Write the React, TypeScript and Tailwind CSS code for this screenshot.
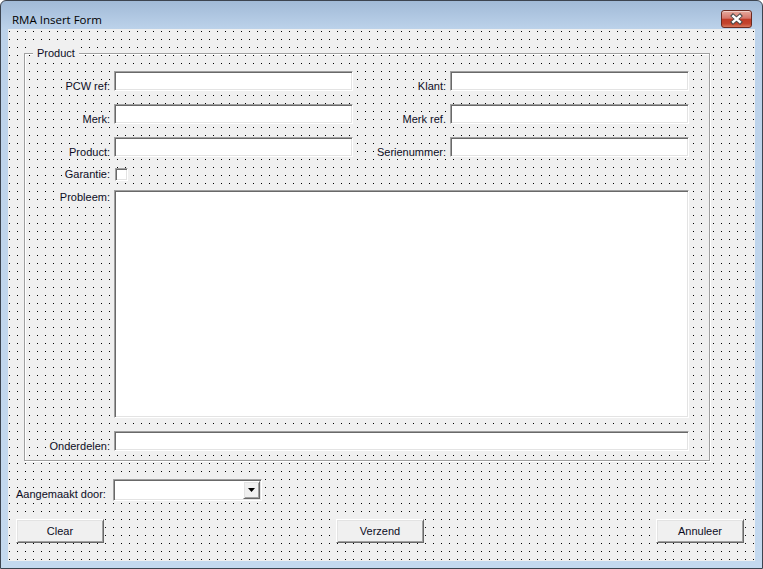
const sunken =
  "border border-t-[#a0a0a0] border-l-[#a0a0a0] border-r-white border-b-white shadow-[inset_1px_1px_0_#696969,inset_-1px_-1px_0_#e3e3e3]";
const raised =
  "border border-t-white border-l-white border-r-[#696969] border-b-[#696969] shadow-[inset_1px_1px_0_#e3e3e3,inset_-1px_-1px_0_#a0a0a0]";
const dots =
  "bg-[#f0f0f0] bg-[image:conic-gradient(at_1px_1px,transparent_270deg,#000_0)] bg-[length:8px_8px]";

function Label({ text, className }: { text: string; className: string }) {
  return (
    <div className={`flex justify-end leading-[13px] ${className}`}>
      <span className="bg-[#f0f0f0] pl-[3px]">{text}</span>
    </div>
  );
}

function TextBox({ className }: { className: string }) {
  return <div className={`bg-white ${sunken} ${className}`} />;
}

function Button({ text }: { text: string }) {
  return (
    <div
      className={`flex h-[24px] w-[88px] items-center justify-center bg-[#f0f0f0] leading-[13px] ${raised}`}
    >
      {text}
    </div>
  );
}

const rows = [
  ["PCW ref:", "Klant:"],
  ["Merk:", "Merk ref."],
  ["Product:", "Serienummer:"],
];

export default function App() {
  return (
    <div className="flex h-[569px] w-[763px] flex-col overflow-hidden rounded-t-[6px] border border-[#3c4450] bg-[linear-gradient(to_bottom,#a1bad7_0px,#bcd2ea_28px,#c4d9ef_100%)]">
      {/* title bar */}
      <div className="flex h-[28px] shrink-0 items-start justify-between">
        <span className="mt-[11px] ml-[11px] font-['Open_Sans',sans-serif] text-[11.5px] leading-[16px] text-black">
          RMA Insert Form
        </span>
        <div className="mt-[9px] mr-[10px] h-[18px] w-[31px] rounded-[3px] border border-[#6b2a20] bg-[linear-gradient(to_bottom,#e6ab9e,#d6766a_45%,#c03c27_52%,#c4452e_80%,#d9795e)] shadow-[inset_0_1px_0_rgba(255,255,255,0.45)]">
          <svg width="29" height="16" viewBox="0 0 29 16">
            <path
              d="M9.5 3.5 L19.5 12.5 M19.5 3.5 L9.5 12.5"
              stroke="#4a4a4a"
              strokeWidth="4.2"
              fill="none"
            />
            <path
              d="M10.3 4.3 L18.7 11.7 M18.7 4.3 L10.3 11.7"
              stroke="#ffffff"
              strokeWidth="2.4"
              fill="none"
            />
          </svg>
        </div>
      </div>

      {/* client area */}
      <div className="flex flex-1 px-[7px] pb-[7px]">
        <div
          className={`flex h-[532px] w-[747px] flex-col bg-[position:1px_2px] font-['Liberation_Sans',Arial,sans-serif] text-[11px] text-[#0c0c24] ${dots}`}
        >
          {/* Product frame */}
          <div
            className={`mt-[24px] ml-[16px] flex h-[408px] w-[686px] flex-col border border-[#a0a0a0] bg-[position:4px_1px] shadow-[1px_1px_0_#fff,inset_1px_1px_0_#fff] ${dots}`}
          >
            <div className="-mt-[7px] ml-[8px] w-fit bg-[#f0f0f0] px-[4px] leading-[13px]">
              Product
            </div>

            <div className="mt-[11px] flex flex-col gap-[13px]">
              {rows.map(([left, right]) => (
                <div key={left} className="flex h-[20px] items-start">
                  <Label text={left} className="mt-[9px] w-[85px]" />
                  <TextBox className="ml-[4px] h-[20px] w-[239px]" />
                  <Label text={right} className="mt-[9px] w-[93px]" />
                  <TextBox className="ml-[4px] h-[20px] w-[239px]" />
                </div>
              ))}
            </div>

            <div className="mt-[11px] flex items-start">
              <Label text="Garantie:" className="w-[85px]" />
              <div className={`ml-[5px] h-[13px] w-[13px] bg-white ${sunken}`} />
            </div>

            <div className="mt-[9px] flex items-start">
              <Label text="Probleem:" className="mt-[1px] w-[85px]" />
              <TextBox className="ml-[4px] h-[228px] w-[575px]" />
            </div>

            <div className="mt-[13px] flex items-start">
              <Label text="Onderdelen:" className="mt-[9px] w-[85px]" />
              <TextBox className="ml-[4px] h-[20px] w-[575px]" />
            </div>
          </div>

          {/* created by */}
          <div className="mt-[18px] flex items-start pl-[8px]">
            <div className="mt-[9px] w-[97px] leading-[13px]">
              <span className="bg-[#f0f0f0]">Aangemaakt door:</span>
            </div>
            <div className={`flex h-[22px] w-[149px] bg-white ${sunken}`}>
              <div className="flex-1" />
              <div
                className={`mt-[1px] mr-[1px] mb-[1px] flex w-[17px] items-center justify-center bg-[#f0f0f0] ${raised}`}
              >
                <svg width="7" height="4" viewBox="0 0 7 4">
                  <path d="M0 0 H7 L3.5 4 Z" fill="#000" />
                </svg>
              </div>
            </div>
          </div>

          {/* buttons */}
          <div className="mt-[18px] flex justify-between pr-[11px] pl-[8px]">
            <Button text="Clear" />
            <Button text="Verzend" />
            <Button text="Annuleer" />
          </div>
        </div>
      </div>
    </div>
  );
}
